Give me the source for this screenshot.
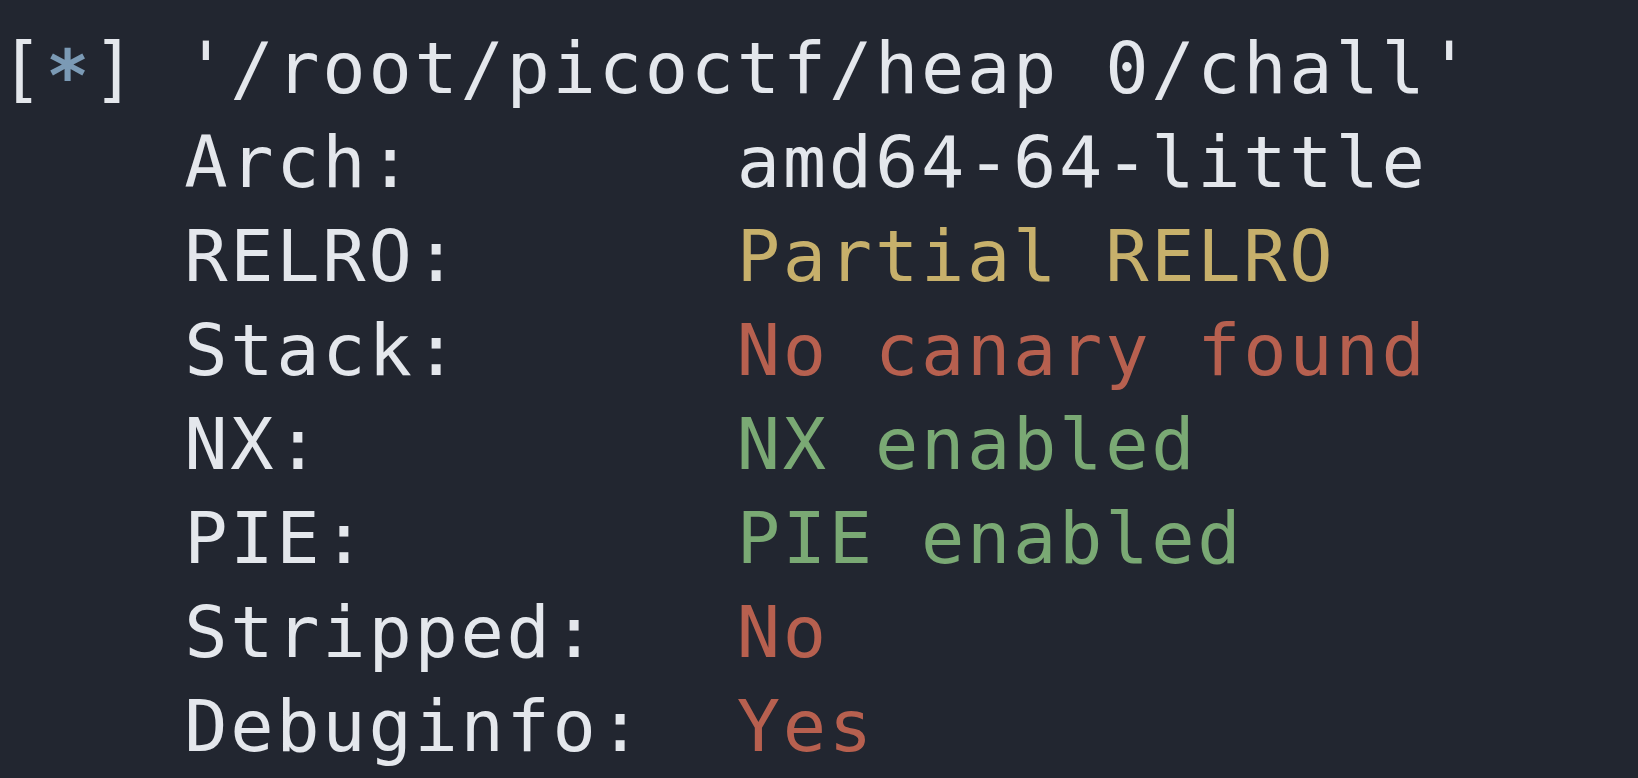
import React from 'react';

type Row = { label: string; value: string; color: string };

const rows: Row[] = [
  { label: 'Arch:', value: 'amd64-64-little', color: 'text-[#e4e7ec]' },
  { label: 'RELRO:', value: 'Partial RELRO', color: 'text-[#c7b06b]' },
  { label: 'Stack:', value: 'No canary found', color: 'text-[#b7604f]' },
  { label: 'NX:', value: 'NX enabled', color: 'text-[#7aa974]' },
  { label: 'PIE:', value: 'PIE enabled', color: 'text-[#7aa974]' },
  { label: 'Stripped:', value: 'No', color: 'text-[#b7604f]' },
  { label: 'Debuginfo:', value: 'Yes', color: 'text-[#b7604f]' },
];

const App = () => {
  return (
    <div className="w-[1638px] h-[778px] overflow-hidden bg-[#222630] text-[#e4e7ec] font-['DejaVu_Sans_Mono',monospace] text-[72px] tracking-[2.7px] leading-[94px]">
      <div className="-mt-[73px]">
        {/* previous line, cut off at the top */}
        <div className="whitespace-pre">{'      o oo ooo      o o o'}</div>
        <div className="whitespace-pre">
          [<span className="relative top-[8px] font-bold text-[#7b9ab5]">*</span>] '/root/picoctf/heap 0/chall'
        </div>
        {rows.map((r) => (
          <div key={r.label} className="whitespace-pre">
            {'    ' + r.label.padEnd(12, ' ')}
            <span className={r.color}>{r.value}</span>
          </div>
        ))}
      </div>
    </div>
  );
};

export default App;
